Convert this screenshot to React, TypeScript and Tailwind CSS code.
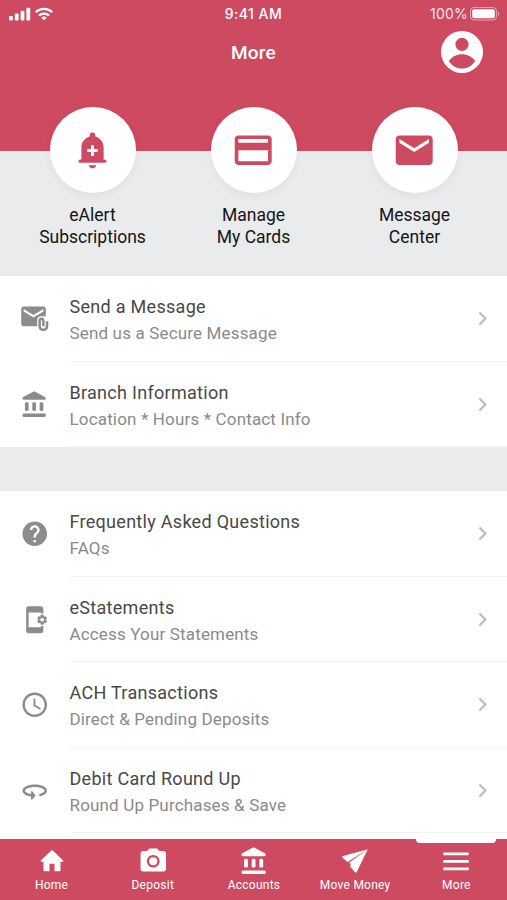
import React from 'react';
import {
  MdAppSettingsAlt,
  MdAttachEmail,
  MdChevronRight,
  MdCreditCard,
  MdEmail,
  MdHelp,
  MdPhotoCamera,
  MdSchedule,
} from 'react-icons/md';

type IconProps = { size?: number; className?: string };

const BankIcon = ({ size = 24, className }: IconProps) => (
  <svg width={size} height={size} viewBox="0 0 24 24" fill="currentColor" className={className}>
    <rect x="4" y="10" width="3" height="7" rx="1.1" />
    <rect x="10" y="10" width="3" height="7" rx="1.1" />
    <rect x="16" y="10" width="3" height="7" rx="1.1" />
    <rect x="2" y="19.2" width="19" height="2.8" rx="1.2" />
    <path d="M10.700 1.400 2.600 5.700C1.600 6.300 1.900 8 3.100 8h16.800c1.200 0 1.500-1.700.5-2.300l-8.100-4.300c-.5-.26-1.100-.26-1.600 0z" />
  </svg>
);

const RotateIcon = ({ size = 24, className }: IconProps) => (
  <svg width={size} height={size} viewBox="0 0 24 24" fill="currentColor" className={className}>
    <path d="M12 7C6.480 7 2 9.240 2 12c0 2.240 2.940 4.130 7 4.770V18.600c0 .7.500.9 1 .5l2.300-2.700c.4-.4.4-.8 0-1.200L10 12.500c-.5-.4-1-.2-1 .5v1.730c-3.150-.56-5-1.900-5-2.730 0-1.060 3.040-3 8-3s8 1.940 8 3c0 .73-1.460 1.790-3.600 2.430-.6.2-.8.6-.8 1 0 .8.600 1.200 1.200 1C20.100 15.600 22 13.900 22 12c0-2.760-4.480-5-10-5z" />
  </svg>
);

const BellPlusIcon = ({ className }: IconProps) => (
  <svg width="29" height="37" viewBox="0 0 30 38" fill="currentColor" className={className}>
    <path
      fillRule="evenodd"
      d="M15 .5a3 3 0 0 1 3 3v1.100c4.900 1.600 8.500 5.800 8.500 11V28.300h1.300a1.700 1.700 0 0 1 0 3.400H2.200a1.700 1.700 0 0 1 0-3.400h1.300V15.600c0-5.200 3.600-9.400 8.500-11V3.500a3 3 0 0 1 3-3zM13.500 13.600v3.900H9.600v3h3.900v4.100h3v-4.100h3.900v-3h-3.900v-3.900z"
    />
    <path d="M11.200 34.200h7.600c-.4 2-1.800 3.200-3.800 3.200s-3.400-1.200-3.800-3.200z" />
  </svg>
);

const ProfileIcon = ({ className }: IconProps) => (
  <svg width="42" height="42" viewBox="2 2 20 20" fill="currentColor" className={className}>
    <path
      fillRule="evenodd"
      d="M12 2a10 10 0 1 0 0 20 10 10 0 0 0 0-20zm0 3.200a3.150 3.150 0 1 1 0 6.300 3.150 3.150 0 0 1 0-6.300zM5.750 16.300C7 14.300 9.500 13.100 12 13.100s5 1.200 6.250 3.200C16.900 18.600 14.600 19.900 12 19.900s-4.900-1.300-6.250-3.600z"
    />
  </svg>
);

const HomeIcon = ({ className }: IconProps) => (
  <svg width="24" height="22" viewBox="0 0 24 22" fill="currentColor" className={className}>
    <path d="M11.200.6a1.200 1.200 0 0 1 1.600 0l10.300 9.800c.6.6.3 1.300-.5 1.300h-2.100v8.300c0 .8-.5 1.300-1.300 1.300h-4.700v-7.500h-5v7.500H4.800c-.8 0-1.300-.5-1.300-1.300v-8.300H1.400c-.8 0-1.100-.7-.5-1.300z" />
  </svg>
);

const PlaneIcon = ({ className }: IconProps) => (
  <svg width="26" height="24" viewBox="0 0 26 24" fill="currentColor" className={className}>
    <path d="M25.800.2 1 6.900c-1 .3-1.100 1.200-.4 1.800l4.900 4.200z" />
    <path d="M25.800.2 14.700 22.900c-.5.9-1.300.9-1.900.1l-4.600-5.400.6-3L6.700 14z" />
  </svg>
);

const MenuIcon = ({ className }: IconProps) => (
  <svg width="26" height="19" viewBox="0 0 26 19" fill="currentColor" className={className}>
    <rect y="0.500" width="26" height="2.800" rx="1.200" />
    <rect y="8" width="26" height="2.800" rx="1.200" />
    <rect y="15.500" width="26" height="2.800" rx="1.200" />
  </svg>
);

const StatusBar = () => (
  <div className="grid h-[27px] grid-cols-3 items-center px-[7px] text-white font-[Inter,sans-serif]">
    <div className="flex items-center gap-[4px] pl-[2px]">
      <svg width="22" height="14" viewBox="0 0 22 14" fill="currentColor">
        <rect x="0" y="9" width="3.800" height="4.500" rx="1" />
        <rect x="5.800" y="6.500" width="3.800" height="7" rx="1" />
        <rect x="11.600" y="3.700" width="3.800" height="9.800" rx="1" />
        <rect x="17.400" y="0.700" width="3.800" height="12.800" rx="1" />
      </svg>
      <svg width="18" height="14" viewBox="0 0 18 14" fill="none" stroke="currentColor" strokeWidth="2.300">
        <path d="M.8 5.200a11.800 11.800 0 0 1 16.400 0" />
        <path d="M4 8.600a7.200 7.200 0 0 1 10 0" />
        <path d="M9 13.200 6.300 10.700a3.900 3.900 0 0 1 5.400 0z" fill="currentColor" stroke="none" />
      </svg>
    </div>
    <p className="text-center text-[14px] font-medium tracking-[0.500px]">9:41 AM</p>
    <div className="flex items-center justify-end gap-[2px]">
      <span className="text-[14px] tracking-[0.200px] text-[#fbe3e6]">100%</span>
      <svg width="30" height="14" viewBox="0 0 30 14" fill="none">
        <rect x="0.500" y="0.500" width="26" height="12.500" rx="3.500" stroke="white" strokeOpacity="0.500" />
        <rect x="2.200" y="2.200" width="22.600" height="9.100" rx="1.800" fill="white" />
        <path d="M28 4.500c1.600.8 1.600 3.700 0 4.500z" fill="white" fillOpacity="0.500" />
      </svg>
    </div>
  </div>
);

const shortcuts = [
  { lines: ['eAlert', 'Subscriptions'], icon: <BellPlusIcon /> },
  { lines: ['Manage', 'My Cards'], icon: <MdCreditCard size={44.4} /> },
  { lines: ['Message', 'Center'], icon: <MdEmail size={44.4} /> },
];

const messageItems = [
  { title: 'Send a Message', subtitle: 'Send us a Secure Message', icon: <MdAttachEmail size={29.5} /> },
  { title: 'Branch Information', subtitle: 'Location * Hours * Contact Info', icon: <BankIcon size={29.5} /> },
];

const serviceItems = [
  { title: 'Frequently Asked Questions', subtitle: 'FAQs', icon: <MdHelp size={29.5} /> },
  { title: 'eStatements', subtitle: 'Access Your Statements', icon: <MdAppSettingsAlt size={29.5} /> },
  { title: 'ACH Transactions', subtitle: 'Direct & Pending Deposits', icon: <MdSchedule size={29.5} /> },
  { title: 'Debit Card Round Up', subtitle: 'Round Up Purchases & Save', icon: <RotateIcon size={29.5} /> },
];

const tabs = [
  { text: 'Home', icon: <HomeIcon /> },
  { text: 'Deposit', icon: <MdPhotoCamera size={30.5} /> },
  { text: 'Accounts', icon: <BankIcon size={30.5} /> },
  { text: 'Move Money', icon: <PlaneIcon /> },
  { text: 'More', icon: <MenuIcon />, active: true },
];

type Item = { title: string; subtitle: string; icon: React.ReactNode };

const ListItem = ({ title, subtitle, icon }: Item) => (
  <li className="flex h-[85.500px] pl-5">
    <span className="flex w-[49.500px] items-center text-[#8c8c8c]">{icon}</span>
    <div className="flex flex-1 items-center justify-between border-b border-[#f3f3f3] pr-[11px]">
      <div className="pt-[3px]">
        <p className="text-[18px] leading-[26px] tracking-[0.290px] text-[#484848]">{title}</p>
        <p className="text-[17px] leading-[26px] tracking-[0.160px] text-[#8a8a8a]">{subtitle}</p>
      </div>
      <MdChevronRight size={27} className="text-[#bdbdbd]" />
    </div>
  </li>
);

const App = () => {
  return (
    <div className="flex h-[900px] w-[507px] flex-col overflow-hidden bg-[#e9ebec] font-[Roboto,sans-serif]">
      <header className="h-[151px] shrink-0 bg-[#cd4a61] text-white">
        <StatusBar />
        <div className="grid h-[50px] grid-cols-3 items-center pr-6">
          <span />
          <h1 className="pt-[3px] pl-6 text-center text-[19px] font-medium tracking-[0.200px]">More</h1>
          <ProfileIcon className="justify-self-end" />
        </div>
      </header>

      <section className="-mt-11 flex h-[169.300px] shrink-0 justify-between px-3">
        {shortcuts.map((item) => (
          <div key={item.lines[0]} className="flex w-[161px] flex-col items-center">
            <div className="flex size-[86px] items-center justify-center rounded-full bg-white text-[#cd4a61] shadow-[0_3px_8px_rgba(0,0,0,0.050)]">
              {item.icon}
            </div>
            <p className="mt-[11px] text-center text-[17.500px] leading-[22px] text-[#151515]">
              {item.lines[0]}
              <br />
              {item.lines[1]}
            </p>
          </div>
        ))}
      </section>

      <ul className="shrink-0 bg-white">
        {messageItems.map((item) => (
          <ListItem key={item.title} {...item} />
        ))}
      </ul>

      <ul className="mt-[44px] flex-1 overflow-hidden bg-white">
        {serviceItems.map((item) => (
          <ListItem key={item.title} {...item} />
        ))}
      </ul>

      <nav className="grid h-[61px] shrink-0 grid-cols-5 bg-[#cd4a61] pl-px text-white">
        {tabs.map((tab) => (
          <a key={tab.text} className="relative flex flex-col items-center">
            {tab.active && <span className="absolute top-0 h-1 w-20 rounded-b-[4px] bg-white" />}
            <span className="mt-[7px] flex h-[30px] items-center">{tab.icon}</span>
            <span className="mt-[1px] text-[12px] leading-4 tracking-[0.250px]">{tab.text}</span>
          </a>
        ))}
      </nav>
    </div>
  );
};

export default App;
